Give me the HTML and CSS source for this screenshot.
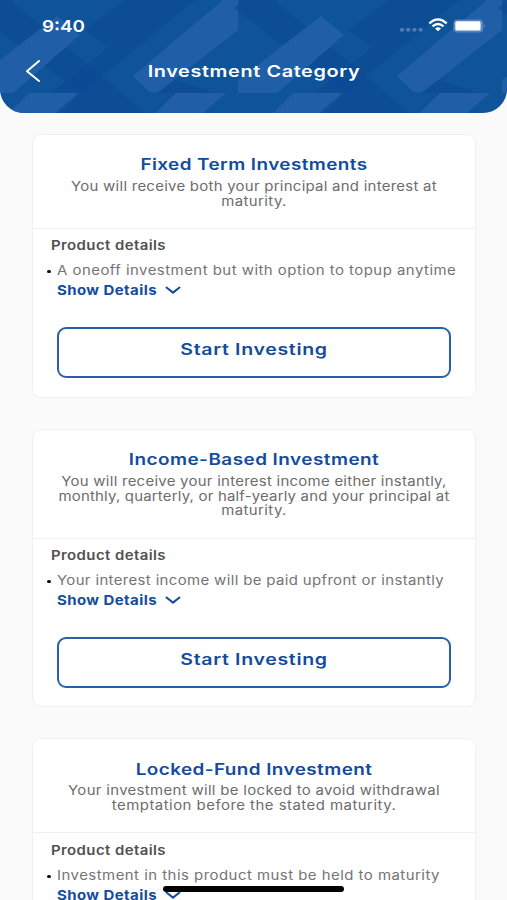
FILE: index.html
```html
<!DOCTYPE html>
<html lang="en">
<head>
<meta charset="utf-8">
<meta name="viewport" content="width=device-width, initial-scale=1">
<title>Investment Category</title>
<link rel="stylesheet" href="styles.css">
</head>
<body>
<header class="header">
  <svg class="pattern" viewBox="0 0 507 113" aria-hidden="true">
    <defs>
      <g id="tile">
        <path class="dark" d="M-20 0 10 0 80 58 122 93 80 93 -30 8Z"/>
        <path class="dark" d="M125 0 195 0 100 78 82 93 50 93 108 48 85 30Z"/>
        <path class="dark" d="M150 93 175 80 215 93Z"/>
        <path class="light" d="M57 16 80 35 13 93-26 93-26 80Z"/>
        <path class="light" d="M133 76 223 0 238 0 238 30 165 87Q155 96 148 91Z"/>
      </g>
      <g id="tile-next">
        <path class="dark" d="M80 93 122 93 145 113 60 113Z"/>
        <path class="light" d="M29 93 78 93 55 113 9 113Z"/>
        <path class="light" d="M176 93 226 93 203 113 156 113Z"/>
      </g>
    </defs>
    <use href="#tile"/><use href="#tile" x="264"/><use href="#tile" x="528"/>
    <use href="#tile-next"/><use href="#tile-next" x="264"/>
  </svg>
  <div class="status">
    <span class="time">9:40</span>
    <svg class="indicators" width="88" height="16" viewBox="0 0 88 16" aria-hidden="true">
      <g fill="#4d7db8"><rect x="2" y="11" width="4" height="3.5" rx="1"/><rect x="8.2" y="11" width="4" height="3.5" rx="1"/><rect x="14.4" y="11" width="4" height="3.5" rx="1"/><rect x="20.6" y="11" width="4" height="3.5" rx="1"/></g>
      <g fill="none" stroke="#fff" stroke-width="2.3"><path d="M31.3 6.3Q40 -1.5 48.7 6.3"/><path d="M34.5 9.4Q40 4.5 45.5 9.4"/></g>
      <path fill="#fff" d="M37 11.5Q40 9 43 11.5L40 14.3Z"/>
      <rect x="55.3" y="2.5" width="30" height="13" rx="4" fill="#5485c0"/>
      <rect x="57.3" y="4.3" width="25.3" height="9.2" rx="1.5" fill="#fff"/>
      <path fill="#6d97c7" d="M86.2 7q1.8 2 0 4Z"/>
    </svg>
  </div>
  <div class="navbar">
    <svg class="back" width="16" height="24" viewBox="0 0 16 24" aria-hidden="true"><path d="M14 2 2 12.3 14 22"/></svg>
    <h1 class="screen-title">Investment Category</h1>
  </div>
</header>

<main class="cards">
  <section class="card">
    <div class="summary">
      <h2 class="title">Fixed Term Investments</h2>
      <p class="desc"><span class="line">You will receive both your principal and interest at</span><span class="line loose">maturity.</span></p>
    </div>
    <div class="details">
      <h3 class="label">Product details</h3>
      <div class="item"><i class="dot"></i><span class="item-text spaced">A oneoff investment but with option to topup anytime</span></div>
      <div class="toggle"><span class="toggle-text">Show Details</span><svg class="chevron" width="16" height="9" viewBox="0 0 16 9"><path d="M1.5 1.5 8 6.6 14.5 1.5"/></svg></div>
      <button class="button"><span class="button-text">Start Investing</span></button>
    </div>
  </section>

  <section class="card card-income">
    <div class="summary">
      <h2 class="title title-income">Income-Based Investment</h2>
      <p class="desc"><span class="line">You will receive your interest income either instantly,</span><span class="line tight">monthly, quarterly, or half-yearly and your principal at</span><span class="line loose">maturity.</span></p>
    </div>
    <div class="details">
      <h3 class="label">Product details</h3>
      <div class="item"><i class="dot"></i><span class="item-text">Your interest income will be paid upfront or instantly</span></div>
      <div class="toggle"><span class="toggle-text">Show Details</span><svg class="chevron" width="16" height="9" viewBox="0 0 16 9"><path d="M1.5 1.5 8 6.6 14.5 1.5"/></svg></div>
      <button class="button"><span class="button-text">Start Investing</span></button>
    </div>
  </section>

  <section class="card card-locked">
    <div class="summary">
      <h2 class="title">Locked-Fund Investment</h2>
      <p class="desc"><span class="line medium">Your investment will be locked to avoid withdrawal</span><span class="line spaced">temptation before the stated maturity.</span></p>
    </div>
    <div class="details">
      <h3 class="label">Product details</h3>
      <div class="item"><i class="dot"></i><span class="item-text spaced">Investment in this product must be held to maturity</span></div>
      <div class="toggle"><span class="toggle-text">Show Details</span><svg class="chevron" width="16" height="9" viewBox="0 0 16 9"><path d="M1.5 1.5 8 6.6 14.5 1.5"/></svg></div>
    </div>
  </section>
</main>
<div class="home-bar"></div>
</body>
</html>
```
FILE: styles.css
```css
* { box-sizing: border-box; }
body {
  margin: 0;
  height: 900px;
  overflow: hidden;
  background: #fafafa;
  font-family: Inter, "Open Sans", sans-serif;
}
h1, h2, h3, p { margin: 0; }

.header {
  position: relative;
  height: 113px;
  overflow: hidden;
  border-radius: 0 0 24px 24px;
  background: #0f5499;
  color: #fff;
}
.pattern { position: absolute; left: 0; top: 0; width: 507px; height: 113px; }
.dark { fill: #0b4995; opacity: .6; }
.light { fill: #205fa8; }
.status {
  position: relative;
  display: flex;
  justify-content: space-between;
  padding: 17px 21px 0 42px;
  height: 46px;
}
.time {
  font-size: 16.5px;
  font-weight: 600;
  line-height: 18px;
  transform: scaleX(1.14);
  transform-origin: left;
}
.indicators { display: block; }
.navbar { position: relative; display: flex; height: 50px; align-items: center; }
.back { margin: 0 0 0 25px; }
.back path { fill: none; stroke: #fff; stroke-width: 2; stroke-linecap: round; stroke-linejoin: round; }
.screen-title {
  flex: 1;
  margin-right: 40px;
  text-align: center;
  font-size: 16px;
  font-weight: 600;
  letter-spacing: .5px;
  transform: scaleX(1.24);
}

.cards {
  display: flex;
  flex-direction: column;
  gap: 31px;
  height: 787px;
  padding: 21px 31px 0 32px;
  overflow: hidden;
}
.card {
  flex: none;
  height: 264px;
  border: 1px solid #f0f0f0;
  border-radius: 9px;
  background: #fff;
}
.card-income { height: 278px; }
.card-locked {
  flex: 1;
  min-height: 0;
  border-bottom: 0;
  border-radius: 9px 9px 0 0;
}
.summary { height: 94px; padding-top: 19px; border-bottom: 1px solid #f0f0f0; text-align: center; }
.card-income .summary { height: 109px; }
.card-locked .summary { padding-top: 20px; }
.title {
  color: #134c9c;
  font-size: 15.5px;
  font-weight: 600;
  line-height: 22px;
  letter-spacing: .34px;
  transform: scaleX(1.22);
}
.title-income { letter-spacing: .38px; }
.desc { padding-top: 3px; color: #6c6c6c; font-size: 13px; line-height: 14.6px; }
.card-locked .desc { padding-top: 2px; }
.line { display: block; white-space: nowrap; letter-spacing: .23px; transform: scaleX(1.15); }
.item-text { letter-spacing: .31px; }
.tight { letter-spacing: .17px; }
.medium { letter-spacing: .28px; }
.loose { letter-spacing: .34px; }
.spaced { letter-spacing: .41px; }

.details { padding: 6px 24px 0; }
.card-locked .details { padding-top: 7px; }
.label {
  margin-left: -6px;
  color: #505050;
  font-size: 13px;
  font-weight: 600;
  line-height: 20px;
  letter-spacing: .36px;
  transform: scaleX(1.15);
  transform-origin: left;
}
.item { display: flex; align-items: center; height: 20px; margin: 5px 0 0 -10px; color: #747474; font-size: 13px; }
.dot { width: 3.5px; height: 3.5px; margin: 3px 6.5px 0 0; border-radius: 50%; background: #111; }
.item-text { white-space: nowrap; transform: scaleX(1.15); transform-origin: left; }
.toggle { display: flex; align-items: center; height: 20px; color: #134c9c; }
.toggle-text {
  width: 108px;
  font-size: 13px;
  font-weight: 700;
  letter-spacing: .38px;
  transform: scaleX(1.15);
  transform-origin: left;
}
.chevron path { fill: none; stroke: #134c9c; stroke-width: 2; stroke-linecap: round; stroke-linejoin: round; }
.button {
  display: block;
  width: 394px;
  height: 51px;
  margin-top: 27px;
  padding: 0 0 7px;
  border: 2px solid #2a60a8;
  border-radius: 9px;
  background: #fff;
  color: #134c9c;
  font: 600 15.5px Inter, "Open Sans", sans-serif;
}
.button-text { display: block; letter-spacing: .53px; transform: scaleX(1.26); }

.home-bar {
  position: fixed;
  left: 163px;
  top: 886px;
  width: 181px;
  height: 6px;
  border-radius: 3px;
  background: #000;
}
```
